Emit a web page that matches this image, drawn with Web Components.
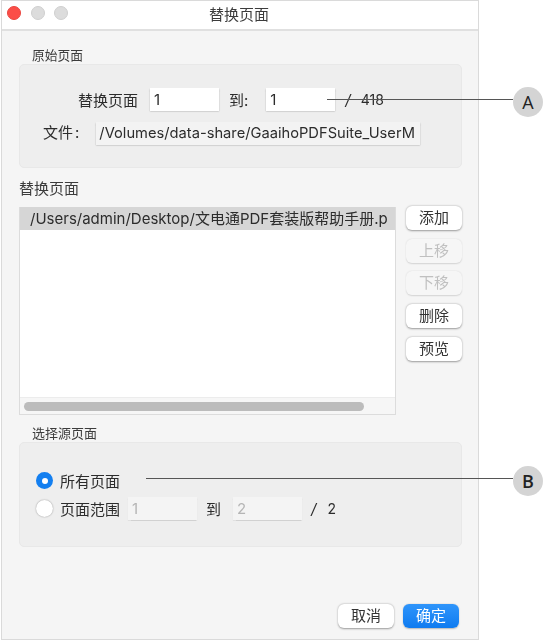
<!DOCTYPE html>
<html lang="zh">
<head>
<meta charset="utf-8">
<title>替换页面</title>
<style>
html, body { margin: 0; padding: 0; background: #fff; }
body { width: 547px; height: 641px; overflow: hidden; position: relative; font-family: Inter, "Noto Sans CJK SC", sans-serif; font-size: 15px; color: #2c2c2c; }
</style>
</head>
<body>
<mac-window heading="替换页面">
  <mac-group label="原始页面" style="--box-height: 104px; --label-size: 12.75px; margin-top: 16px">
    <div style="display:flex; align-items:center; padding: 23px 0 0 58px; height: 23px">
      <span>替换页面</span>
      <mac-field value="1" style="width:69px; margin-left:12px"></mac-field>
      <span style="margin-left:10px">到:</span>
      <mac-field value="1" style="width:69px; margin-left:18px"></mac-field>
      <span style="margin-left:10px; font-style:italic">/</span>
      <span style="margin-left:10px; font-size:14px">418</span>
    </div>
    <div style="display:flex; align-items:center; padding: 11px 0 0 23px; height: 23px">
      <span style="margin-top:-4px">文件<span style="margin-left:2px">:</span></span>
      <mac-field value="/Volumes/data-share/GaaihoPDFSuite_UserM" style="width:324px; margin-left:17px" tone="grey"></mac-field>
    </div>
  </mac-group>

  <mac-heading>替换页面</mac-heading>

  <div style="display:flex; gap:10px; align-items:flex-start">
    <mac-list selected="/Users/admin/Desktop/文电通PDF套装版帮助手册.p"></mac-list>
    <div style="display:flex; flex-direction:column; gap:8.7px; margin-top:-1px">
      <mac-button>添加</mac-button>
      <mac-button disabled>上移</mac-button>
      <mac-button disabled>下移</mac-button>
      <mac-button>删除</mac-button>
      <mac-button>预览</mac-button>
    </div>
  </div>

  <mac-group label="选择源页面" style="--box-height: 105px; --label-size: 13px; margin-top: 10px">
    <div style="display:flex; align-items:center; padding: 26px 0 0 16px; height: 23px">
      <mac-radio checked>所有页面</mac-radio>
    </div>
    <div style="display:flex; align-items:center; padding: 5px 0 0 16px; height: 23px">
      <mac-radio>页面范围</mac-radio>
      <mac-field value="1" disabled style="width:69px; margin-left:8px"></mac-field>
      <span style="margin-left:9px">到</span>
      <mac-field value="2" disabled style="width:69px; margin-left:12px"></mac-field>
      <span style="margin-left:9px; font-style:italic">/</span>
      <span style="margin-left:11px; font-size:14px">2</span>
    </div>
  </mac-group>

  <div style="display:flex; gap:9px; justify-content:flex-end; margin:57px 3px 0 0">
    <mac-button>取消</mac-button>
    <mac-button primary>确定</mac-button>
  </div>
</mac-window>

<mac-callout letter="A" style="left:327px; top:87px; width:216px"></mac-callout>
<mac-callout letter="B" bold style="left:146px; top:466px; width:397px"></mac-callout>

<script>
class MacWindow extends HTMLElement {
  constructor() {
    super();
    const root = this.attachShadow({ mode: "open" });
    root.innerHTML = `
<style>
:host { display: flex; flex-direction: column; box-sizing: border-box; width: 478px; height: 640px; margin-left: 1px; border: 1px solid #dadada; background: #f5f5f5; overflow: hidden; filter: blur(0.3px); }
.bar { position: relative; flex: none; background: #fff; border-bottom: 2px solid #e0e0e0; display: flex; align-items: center; justify-content: center; font-size: 15px; color: #3c3c3c; padding: 0 2px 3px 0; height: 25px; }
.lights { position: absolute; left: 5px; top: 5px; display: flex; gap: 9.5px; }
.lights i { display: block; width: 14px; height: 14px; border-radius: 50%; background: #dcdcdc; border: 0.5px solid #cfcfcf; box-sizing: border-box; }
.lights i:first-child { background: #fb4e48; border-color: #ea4640; }
.body { padding: 0 16px 0 17px; flex: 1; }
</style>
<div class="bar">
  <div class="lights"><i></i><i></i><i></i></div>
  <span id="t"></span>
</div>
<div class="body"><slot></slot></div>`;
    root.getElementById("t").textContent = this.getAttribute("heading");
  }
}

class MacGroup extends HTMLElement {
  constructor() {
    super();
    const root = this.attachShadow({ mode: "open" });
    root.innerHTML = `
<style>
:host { display: block; width: 443px; }
.label { height: 17px; line-height: 17px; padding-left: 13px; font-size: var(--label-size, 13px); color: #3c3c3c; }
.box { box-sizing: border-box; height: var(--box-height, 104px); background: #eeeeee; border: 1px solid #e8e8e8; border-radius: 5px; }
</style>
<div class="label" id="l"></div>
<div class="box"><slot></slot></div>`;
    root.getElementById("l").textContent = this.getAttribute("label");
  }
}

class MacHeading extends HTMLElement {
  constructor() {
    super();
    const root = this.attachShadow({ mode: "open" });
    root.innerHTML = `
<style>
:host { display: block; height: 39px; line-height: 41px; font-size: 15px; color: #3c3c3c; }
</style>
<slot></slot>`;
  }
}

class MacField extends HTMLElement {
  constructor() {
    super();
    const root = this.attachShadow({ mode: "open" });
    root.innerHTML = `
<style>
:host { display: block; flex: none; box-sizing: border-box; height: 23px; line-height: 23px; background: #fff; padding: 0 3px 0 4px; box-shadow: 0 0.5px 1.5px rgba(0,0,0,.3); overflow: hidden; white-space: nowrap; font-size: 15px; color: #2c2c2c; }
:host([tone="grey"]) { background: #f3f3f3; font-size: 14.7px; padding: 0 0 0 3px; }
:host([disabled]) { background: #f4f4f4; color: #b5b5b5; box-shadow: 0 0.5px 1px rgba(0,0,0,.12); }
</style>
<span id="v"></span>`;
    root.getElementById("v").textContent = this.getAttribute("value");
  }
}

class MacList extends HTMLElement {
  constructor() {
    super();
    const root = this.attachShadow({ mode: "open" });
    root.innerHTML = `
<style>
:host { display: flex; flex-direction: column; flex: none; box-sizing: border-box; width: 377px; height: 208px; background: #fff; border: 1px solid #dcdcdc; border-top: 0; }
.row { height: 23px; line-height: 23px; background: #d6d6d6; padding-left: 10px; white-space: nowrap; overflow: hidden; color: #2c2c2c; font-size: 15px; flex: none; }
.space { flex: 1; }
.track { height: 17px; flex: none; background: #f6f6f6; border-top: 1px solid #ececec; box-sizing: border-box; padding: 4px 31px 3px 4px; }
.thumb { height: 100%; border-radius: 5px; background: #bcbcbc; }
</style>
<div class="row" id="r"></div>
<div class="space"></div>
<div class="track"><div class="thumb"></div></div>`;
    root.getElementById("r").textContent = this.getAttribute("selected");
  }
}

class MacButton extends HTMLElement {
  constructor() {
    super();
    const root = this.attachShadow({ mode: "open" });
    root.innerHTML = `
<style>
:host { display: block; box-sizing: border-box; width: 56px; height: 24px; line-height: 23px; text-align: center; background: #fff; border-radius: 6px; box-shadow: 0 0.5px 2px rgba(0,0,0,.38); color: #333; font-size: 15px; }
:host([disabled]) { background: #f6f6f6; color: #c0c0c0; box-shadow: 0 0.5px 1.5px rgba(0,0,0,.14); }
:host([primary]) { background: linear-gradient(#2f95fb, #0f7bf0); color: #fff; box-shadow: 0 0.5px 1.5px rgba(0,0,0,.25); }
</style>
<slot></slot>`;
  }
}

class MacRadio extends HTMLElement {
  constructor() {
    super();
    const root = this.attachShadow({ mode: "open" });
    root.innerHTML = `
<style>
:host { display: inline-flex; align-items: center; gap: 7px; flex: none; }
.dot { width: 17px; height: 17px; box-sizing: border-box; border-radius: 50%; background: #fff; box-shadow: 0 0 1.5px rgba(0,0,0,.45); display: flex; align-items: center; justify-content: center; }
:host([checked]) .dot { background: #137ff0; box-shadow: none; }
:host([checked]) .dot::after { content: ""; width: 6px; height: 6px; border-radius: 50%; background: #fff; }
</style>
<span class="dot"></span><slot></slot>`;
  }
}

class MacCallout extends HTMLElement {
  constructor() {
    super();
    const root = this.attachShadow({ mode: "open" });
    root.innerHTML = `
<style>
:host { position: absolute; display: flex; align-items: center; height: 30px; }
.line { flex: 1; height: 1px; background: #555; margin-top: -5px; }
.badge { width: 30px; height: 30px; flex: none; border-radius: 50%; background: #d4d4d4; display: flex; align-items: center; justify-content: center; font: 18px "Open Sans", "Liberation Sans", sans-serif; color: #222; }
:host([bold]) .badge { font-weight: 600; }
</style>
<div class="line"></div><div class="badge" id="b"></div>`;
    root.getElementById("b").textContent = this.getAttribute("letter");
  }
}

customElements.define("mac-window", MacWindow);
customElements.define("mac-group", MacGroup);
customElements.define("mac-heading", MacHeading);
customElements.define("mac-field", MacField);
customElements.define("mac-list", MacList);
customElements.define("mac-button", MacButton);
customElements.define("mac-radio", MacRadio);
customElements.define("mac-callout", MacCallout);
</script>
</body>
</html>
